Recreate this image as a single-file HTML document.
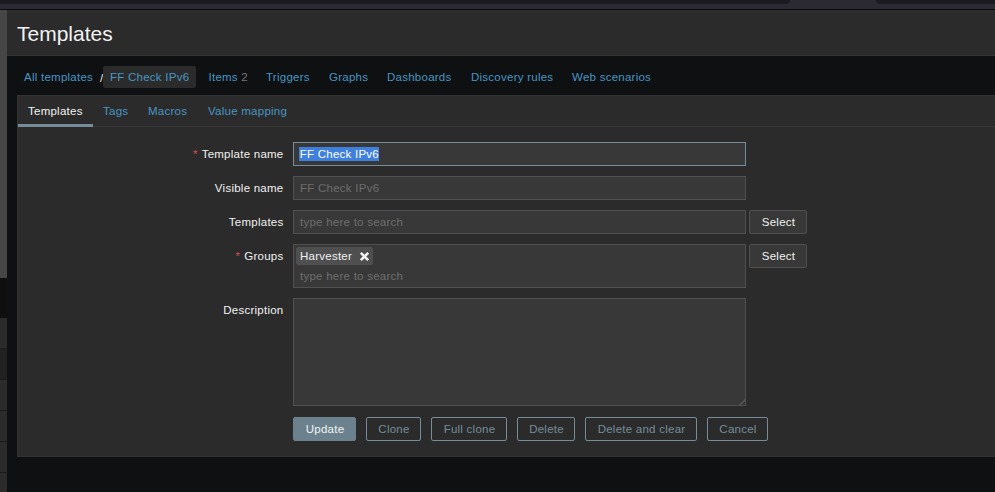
<!DOCTYPE html>
<html><head><meta charset="utf-8">
<style>
*{box-sizing:border-box;margin:0;padding:0}
html,body{width:995px;height:492px;overflow:hidden;background:#0e1012;font-family:"Liberation Sans",sans-serif;font-size:11.5px;letter-spacing:0.25px;line-height:14px;color:#f2f2f2}
.a{position:absolute;white-space:nowrap}
.lnk{color:#4796c4}
#strip{position:absolute;left:0;top:0;width:995px;height:10px;background:#2b2a33}
#strip .dk{position:absolute;top:0;height:4px;background:#1c1b22}
#strip .ln{position:absolute;left:0;top:9px;width:995px;height:1px;background:#0b0b0d}
#side{position:absolute;left:0;top:10px;width:7px;height:482px;background:#464646}
#side div{position:absolute;left:0;width:7px}
#hdr{position:absolute;left:7px;top:10px;width:988px;height:46px;background:#2b2b2b;border-bottom:1px solid #333}
#hdr h1{position:absolute;left:10px;top:12px;font-size:21px;line-height:24px;letter-spacing:0;font-weight:normal;color:#f2f2f2}
#crumbsel{position:absolute;left:103px;top:66px;width:93px;height:22px;background:#2b2b2b;border-radius:2px}
#panel{position:absolute;left:17px;top:95px;width:978px;height:362px;background:#2b2b2b;border:1px solid #333;border-right:none}
#tabline{position:absolute;left:17px;top:126px;width:978px;height:1px;background:#383838}
#tabact{position:absolute;left:18px;top:124px;width:75px;height:3px;background:#768d99}
.lbl{position:absolute;text-align:right;right:711.5px;color:#f2f2f2}
.ast{color:#d64e4e;margin-right:4px}
.inp{position:absolute;left:293px;width:453px;height:24px;background:#383838;border:1px solid #4f4f4f}
.ph{position:absolute;color:#6e6e6e}
.btn{position:absolute;height:24px;border-radius:2px;text-align:center;line-height:22px;padding-left:1px}
.bsel{background:#383838;border:1px solid #4f4f4f;color:#f2f2f2}
.balt{border:1px solid #768d99;color:#768d99;background:#2b2b2b}
.bpri{background:#6b828e;border:1px solid #6b828e;color:#f2f2f2}
</style></head><body>
<div id="strip"><div class="dk" style="left:0;width:790px;border-radius:0 0 4px 0"></div><div class="dk" style="left:876px;width:119px;border-radius:0 0 0 4px"></div><div class="ln"></div></div>
<div id="side">
<div style="top:268px;height:40px;background:#0f0f0f"></div>
<div style="top:308px;height:31px;background:#2b2b2b;border-bottom:1px solid #1d1d1d"></div>
<div style="top:339px;height:30px;background:#212121"></div>
<div style="top:369px;height:31px;background:#2b2b2b;border-top:1px solid #1b1b1b"></div>
<div style="top:400px;height:31px;background:#2b2b2b;border-top:1px solid #1b1b1b"></div>
<div style="top:431px;height:31px;background:#2b2b2b;border-top:1px solid #1b1b1b"></div>
<div style="top:462px;height:31px;background:#2b2b2b;border-top:1px solid #1b1b1b"></div>
</div>
<div id="hdr"><h1>Templates</h1></div>

<div class="a lnk" style="left:24px;top:70px">All templates</div>
<div class="a" style="left:100px;top:71px;color:#f2f2f2">/</div>
<div id="crumbsel"></div>
<div class="a lnk" style="left:110px;top:70px">FF Check IPv6</div>
<div class="a lnk" style="left:208.5px;top:70px">Items <span style="color:#767676">2</span></div>
<div class="a lnk" style="left:266px;top:70px">Triggers</div>
<div class="a lnk" style="left:329px;top:70px">Graphs</div>
<div class="a lnk" style="left:387px;top:70px">Dashboards</div>
<div class="a lnk" style="left:471px;top:70px">Discovery rules</div>
<div class="a lnk" style="left:572px;top:70px">Web scenarios</div>

<div id="panel"></div>
<div id="tabline"></div>
<div id="tabact"></div>
<div class="a" style="left:28px;top:104px">Templates</div>
<div class="a lnk" style="left:103px;top:104px">Tags</div>
<div class="a lnk" style="left:148px;top:104px">Macros</div>
<div class="a lnk" style="left:208px;top:104px">Value mapping</div>

<div class="lbl" style="top:147px"><span class="ast">*</span>Template name</div>
<div class="inp" style="top:142px;border-color:#768d99"></div>
<div class="a" style="left:299px;top:147px;width:80px;padding-left:0.7px;background:#3e80dc;color:#fff">FF Check IPv6</div>

<div class="lbl" style="top:181px">Visible name</div>
<div class="inp" style="top:176px"></div>
<div class="ph" style="left:300px;top:181px">FF Check IPv6</div>

<div class="lbl" style="top:215px">Templates</div>
<div class="inp" style="top:210px"></div>
<div class="ph" style="left:300px;top:215px">type here to search</div>
<div class="btn bsel" style="left:749px;top:210px;width:58px">Select</div>

<div class="lbl" style="top:249px"><span class="ast">*</span>Groups</div>
<div class="inp" style="top:244px;height:44px"></div>
<div class="a" style="left:296px;top:247px;width:77px;height:18px;background:#4f4f4f;border-radius:2px"></div>
<div class="a" style="left:300px;top:249px">Harvester</div>
<svg class="a" style="left:359px;top:251px" width="11" height="11" viewBox="0 0 11 11"><path d="M1.8 1.8L9.2 9.2M9.2 1.8L1.8 9.2" stroke="#f2f2f2" stroke-width="2.6"/></svg>
<div class="ph" style="left:300px;top:269px">type here to search</div>
<div class="btn bsel" style="left:749px;top:244px;width:58px">Select</div>

<div class="lbl" style="top:303px">Description</div>
<div class="inp" style="top:298px;height:108px"></div>
<svg class="a" style="left:739px;top:399px" width="7" height="7" viewBox="0 0 7 7"><path d="M1 6L6 1V6Z" fill="#333"/><path d="M0.5 6.5L6.5 0.5" stroke="#5a5a5a" stroke-width="1.3"/></svg>

<div class="btn bpri" style="left:293px;top:417px;width:63px">Update</div>
<div class="btn balt" style="left:366px;top:417px;width:55px">Clone</div>
<div class="btn balt" style="left:431px;top:417px;width:76px">Full clone</div>
<div class="btn balt" style="left:517px;top:417px;width:58px">Delete</div>
<div class="btn balt" style="left:585px;top:417px;width:112px">Delete and clear</div>
<div class="btn balt" style="left:707px;top:417px;width:61px">Cancel</div>
</body></html>
